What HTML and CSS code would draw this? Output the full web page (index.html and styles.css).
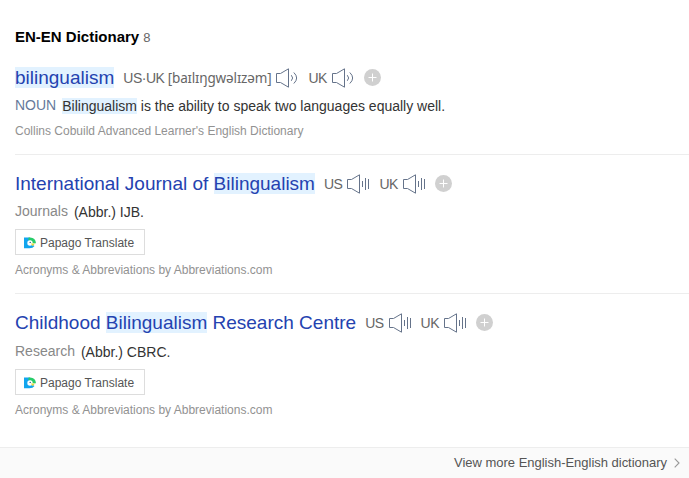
FILE: index.html
```html
<!DOCTYPE html>
<html lang="en">
<head>
<meta charset="utf-8">
<title>EN-EN Dictionary</title>
<link rel="stylesheet" href="styles.css">
</head>
<body>
<svg class="defs" aria-hidden="true">
  <symbol id="wave" viewBox="0 0 22 20"><path d="M.5 5.5H4.5L12.5.8V19.2L4.5 14.5H.5Z"/><path d="M15.3 7.2Q18 10 15.3 12.8M17.8 4.5Q23.5 10 17.8 15.5"/></symbol>
  <symbol id="bars" viewBox="0 0 22 20"><path d="M.5 5.5H4.5L12.5.8V19.2L4.5 14.5H.5Z"/><path d="M15.5 7V13M18.5 4V16M21.5 5V15"/></symbol>
  <symbol id="plus" viewBox="0 0 17 17"><circle cx="8.5" cy="8.5" r="8.5" fill="#d0d0d0"/><path d="M8.5 4.5V12.5M4.5 8.5H12.5" stroke="#fff"/></symbol>
  <symbol id="papago" viewBox="0 0 12 12"><path d="M0 .5H6V6L10.5 9Q9 11.2 5.5 11.2H0V.5Z" fill="#12a5ee"/><path d="M4.5.5H6.2Q11.5.8 12 6.3H8Q7 3.4 4.5 3Z" fill="#27cc69"/><circle cx="6" cy="6" r="2.7" fill="#fff"/><path d="M6.7 6.5H11L8.7 9.2Z" fill="#e6da45"/><circle cx="6.2" cy="5.4" r=".7" fill="#234a78"/></symbol>
</svg>
<main class="dictionary">
  <h2 class="heading">EN-EN Dictionary <span class="count">8</span></h2>
  <article class="entry definition">
    <div class="title-row">
      <a class="word"><mark>bilingualism</mark></a>
      <span class="accent">US·UK <span class="ipa">[baɪlɪŋgwəlɪzəm]</span></span><svg class="speaker"><use href="#wave"/></svg>
      <span class="accent next">UK</span><svg class="speaker"><use href="#wave"/></svg>
      <svg class="add"><use href="#plus"/></svg>
    </div>
    <p class="meaning"><span class="class noun">NOUN</span><span class="text"><mark>Bilingualism</mark> is the ability to speak two languages equally well.</span></p>
    <p class="source">Collins Cobuild Advanced Learner's English Dictionary</p>
  </article>
  <article class="entry">
    <div class="title-row">
      <a class="word">International Journal of <mark>Bilingualism</mark></a>
      <span class="accent">US</span><svg class="speaker"><use href="#bars"/></svg>
      <span class="accent next">UK</span><svg class="speaker"><use href="#bars"/></svg>
      <svg class="add"><use href="#plus"/></svg>
    </div>
    <p class="meaning"><span class="class">Journals</span><span class="text">(Abbr.) IJB.</span></p>
    <a class="translate"><svg class="logo"><use href="#papago"/></svg>Papago Translate</a>
    <p class="source">Acronyms &amp; Abbreviations by Abbreviations.com</p>
  </article>
  <article class="entry">
    <div class="title-row">
      <a class="word">Childhood <mark>Bilingualism</mark> Research Centre</a>
      <span class="accent">US</span><svg class="speaker"><use href="#bars"/></svg>
      <span class="accent next">UK</span><svg class="speaker"><use href="#bars"/></svg>
      <svg class="add"><use href="#plus"/></svg>
    </div>
    <p class="meaning"><span class="class">Research</span><span class="text">(Abbr.) CBRC.</span></p>
    <a class="translate"><svg class="logo"><use href="#papago"/></svg>Papago Translate</a>
    <p class="source">Acronyms &amp; Abbreviations by Abbreviations.com</p>
  </article>
</main>
<a class="more">View more English-English dictionary<svg class="chevron" viewBox="0 0 6 10"><path d="M.7.7 5 5 .7 9.3"/></svg></a>
</body>
</html>
```
FILE: styles.css
```css
* { box-sizing: border-box; }
body { margin: 0; height: 478px; overflow: hidden; background: #fff; font-family: "Liberation Sans", Arial, sans-serif; display: flex; flex-direction: column; }
p, h2 { margin: 0; }
.defs { display: none; }
.dictionary { height: 447px; flex: none; padding: 27px 0 0 15px; }
.heading { height: 20px; font-size: 15px; line-height: 20px; color: #000; white-space: nowrap; }
.count { font-size: 13px; font-weight: 400; color: #666; }
.entry { height: 139px; padding-top: 16px; border-bottom: 1px solid #ededed; white-space: nowrap; }
.definition { height: 108px; padding-top: 18px; }
.entry:last-of-type { border-bottom: 0; }
.title-row { display: flex; align-items: center; height: 26px; }
.word { font-size: 19px; line-height: 22px; color: #2442b0; }
mark { color: inherit; background: #e2f2ff; }
.accent { margin-left: 9px; font-size: 14px; letter-spacing: -.5px; line-height: 18px; margin-bottom: 1px; color: #666; }
.accent.next { margin-left: 10px; }
.ipa { font-family: "Noto Sans", sans-serif; font-size: 13.5px; letter-spacing: -.15px; }
.speaker { flex: none; width: 22px; height: 20px; margin-left: 5px; fill: none; stroke: #65738a; stroke-width: 1; }
.add { flex: none; width: 17px; height: 17px; margin: 0 0 1px 10px; }
.meaning { display: flex; height: 29px; font-size: 14px; line-height: 29px; color: #333; }
.entry:last-of-type .meaning { margin-top: 1px; }
.class { margin-right: 6px; color: #888; }
.noun { color: #65799b; }
.text { position: relative; top: 1px; }
.source { height: 19px; font-size: 12px; line-height: 19px; color: #929292; }
.definition .source { margin-top: 2px; }
.translate { display: flex; align-items: center; width: 130px; height: 26px; margin: 3px 0 6px; padding: 1px 0 0 8px; border: 1px solid #ddd; font-size: 12px; color: #555; }
.logo { width: 12px; height: 12px; margin-right: 4px; }
.more { display: flex; align-items: center; justify-content: flex-end; height: 31px; padding: 0 9px 1px 0; background: #fafafa; border-top: 1px solid #ededed; font-size: 13px; letter-spacing: -.02px; color: #555; }
.chevron { width: 6px; height: 10px; margin-left: 7px; fill: none; stroke: #999; stroke-width: 1.1; }
```
